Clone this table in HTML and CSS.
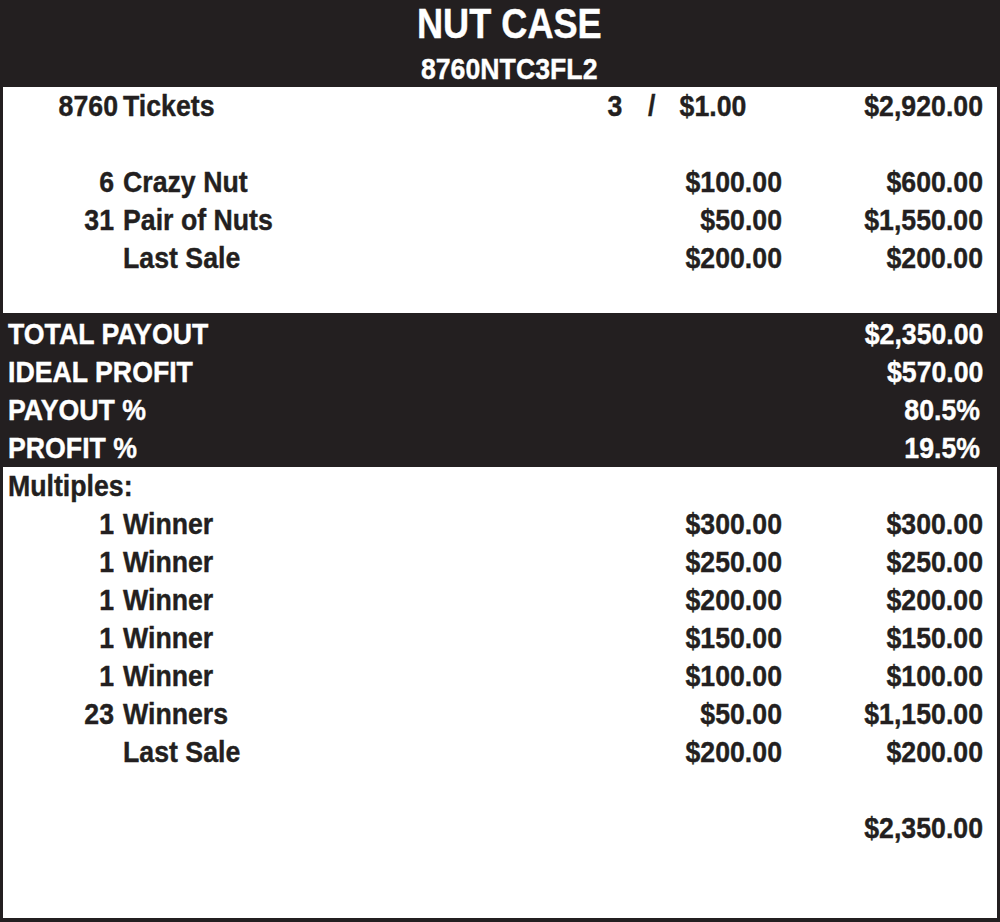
FILE: index.html
```html
<!DOCTYPE html>
<html>
<head>
<meta charset="utf-8">
<link rel="stylesheet" href="styles.css">
</head>
<body>
<div class="sheet">
  <header class="head">
    <div class="title">NUT CASE</div>
    <div class="code">8760NTC3FL2</div>
  </header>

  <section class="block">
    <div class="row">
      <span class="num tight">8760</span><span class="name">Tickets</span>
      <span class="price ticket"><span>3</span><span class="slash">/</span><span>$1.00</span></span>
      <span class="total">$2,920.00</span>
    </div>
    <div class="row"></div>
    <div class="row">
      <span class="num">6</span><span class="name">Crazy Nut</span>
      <span class="price">$100.00</span><span class="total">$600.00</span>
    </div>
    <div class="row">
      <span class="num">31</span><span class="name">Pair of Nuts</span>
      <span class="price">$50.00</span><span class="total">$1,550.00</span>
    </div>
    <div class="row">
      <span class="num"></span><span class="name">Last Sale</span>
      <span class="price">$200.00</span><span class="total">$200.00</span>
    </div>
  </section>

  <section class="band">
    <div class="brow"><span class="blabel">TOTAL PAYOUT</span><span class="bvalue">$2,350.00</span></div>
    <div class="brow"><span class="blabel">IDEAL PROFIT</span><span class="bvalue">$570.00</span></div>
    <div class="brow"><span class="blabel">PAYOUT %</span><span class="bvalue pct">80.5%</span></div>
    <div class="brow"><span class="blabel">PROFIT %</span><span class="bvalue pct">19.5%</span></div>
  </section>

  <section class="block">
    <div class="label"><span class="blabel">Multiples:</span></div>
    <div class="row">
      <span class="num">1</span><span class="name">Winner</span>
      <span class="price">$300.00</span><span class="total">$300.00</span>
    </div>
    <div class="row">
      <span class="num">1</span><span class="name">Winner</span>
      <span class="price">$250.00</span><span class="total">$250.00</span>
    </div>
    <div class="row">
      <span class="num">1</span><span class="name">Winner</span>
      <span class="price">$200.00</span><span class="total">$200.00</span>
    </div>
    <div class="row">
      <span class="num">1</span><span class="name">Winner</span>
      <span class="price">$150.00</span><span class="total">$150.00</span>
    </div>
    <div class="row">
      <span class="num">1</span><span class="name">Winner</span>
      <span class="price">$100.00</span><span class="total">$100.00</span>
    </div>
    <div class="row">
      <span class="num">23</span><span class="name">Winners</span>
      <span class="price">$50.00</span><span class="total">$1,150.00</span>
    </div>
    <div class="row">
      <span class="num"></span><span class="name">Last Sale</span>
      <span class="price">$200.00</span><span class="total">$200.00</span>
    </div>
    <div class="row"></div>
    <div class="row">
      <span class="num"></span><span class="name"></span>
      <span class="price"></span><span class="total">$2,350.00</span>
    </div>
  </section>
</div>
</body>
</html>
```
FILE: styles.css
```css
* { box-sizing: border-box; }
html, body { margin: 0; padding: 0; background: #fff; }
body {
  font-family: "Liberation Sans", Arial, sans-serif;
  font-weight: bold;
  color: #231f20;
  -webkit-text-stroke: 0.4px currentColor;
}
.sheet {
  width: 1000px;
  height: 922px;
  border: 3px solid #231f20;
  border-top: 0;
  border-bottom-width: 4px;
  background: #fff;
  display: flex;
  flex-direction: column;
}
.head {
  background: #231f20;
  color: #fff;
  height: 87px;
  margin: 0 -3px;
  padding-left: 18px;
  display: flex;
  flex-direction: column;
  align-items: center;
}
.title {
  font-size: 42px;
  line-height: 48px;
  transform: scaleX(0.86);
}
.code {
  font-size: 30px;
  line-height: 36px;
  padding-top: 3px;
  transform: scaleX(0.89);
}
.block { display: flex; flex-direction: column; }
.row {
  height: 38px;
  display: grid;
  grid-template-columns: 111px 1fr 200px 192px;
  column-gap: 9px;
  align-items: center;
  font-size: 30px;
  line-height: 38px;
  padding-right: 14px;
}
.num, .price, .total {
  text-align: right;
  transform: scaleX(0.89);
  transform-origin: right center;
}
.name {
  transform: scaleX(0.89);
  transform-origin: left center;
  white-space: nowrap;
}
.num.tight { margin-right: -4px; }
.ticket {
  display: flex;
  justify-content: flex-end;
  padding-right: 40px;
}
.ticket .slash { margin: 0 27px 0 29px; }
.band {
  margin: 36px -3px 0;
  background: #231f20;
  color: #fff;
  padding: 2px 17px 0 8px;
}
.brow {
  height: 38px;
  display: flex;
  justify-content: space-between;
  align-items: center;
  font-size: 30px;
  line-height: 38px;
}
.blabel {
  display: inline-block;
  transform: scaleX(0.89);
  transform-origin: left center;
  white-space: nowrap;
}
.bvalue {
  display: inline-block;
  transform: scaleX(0.89);
  transform-origin: right center;
}
.pct { margin-right: 3px; }
.label {
  height: 38px;
  font-size: 30px;
  line-height: 38px;
  padding-left: 5px;
}
```
